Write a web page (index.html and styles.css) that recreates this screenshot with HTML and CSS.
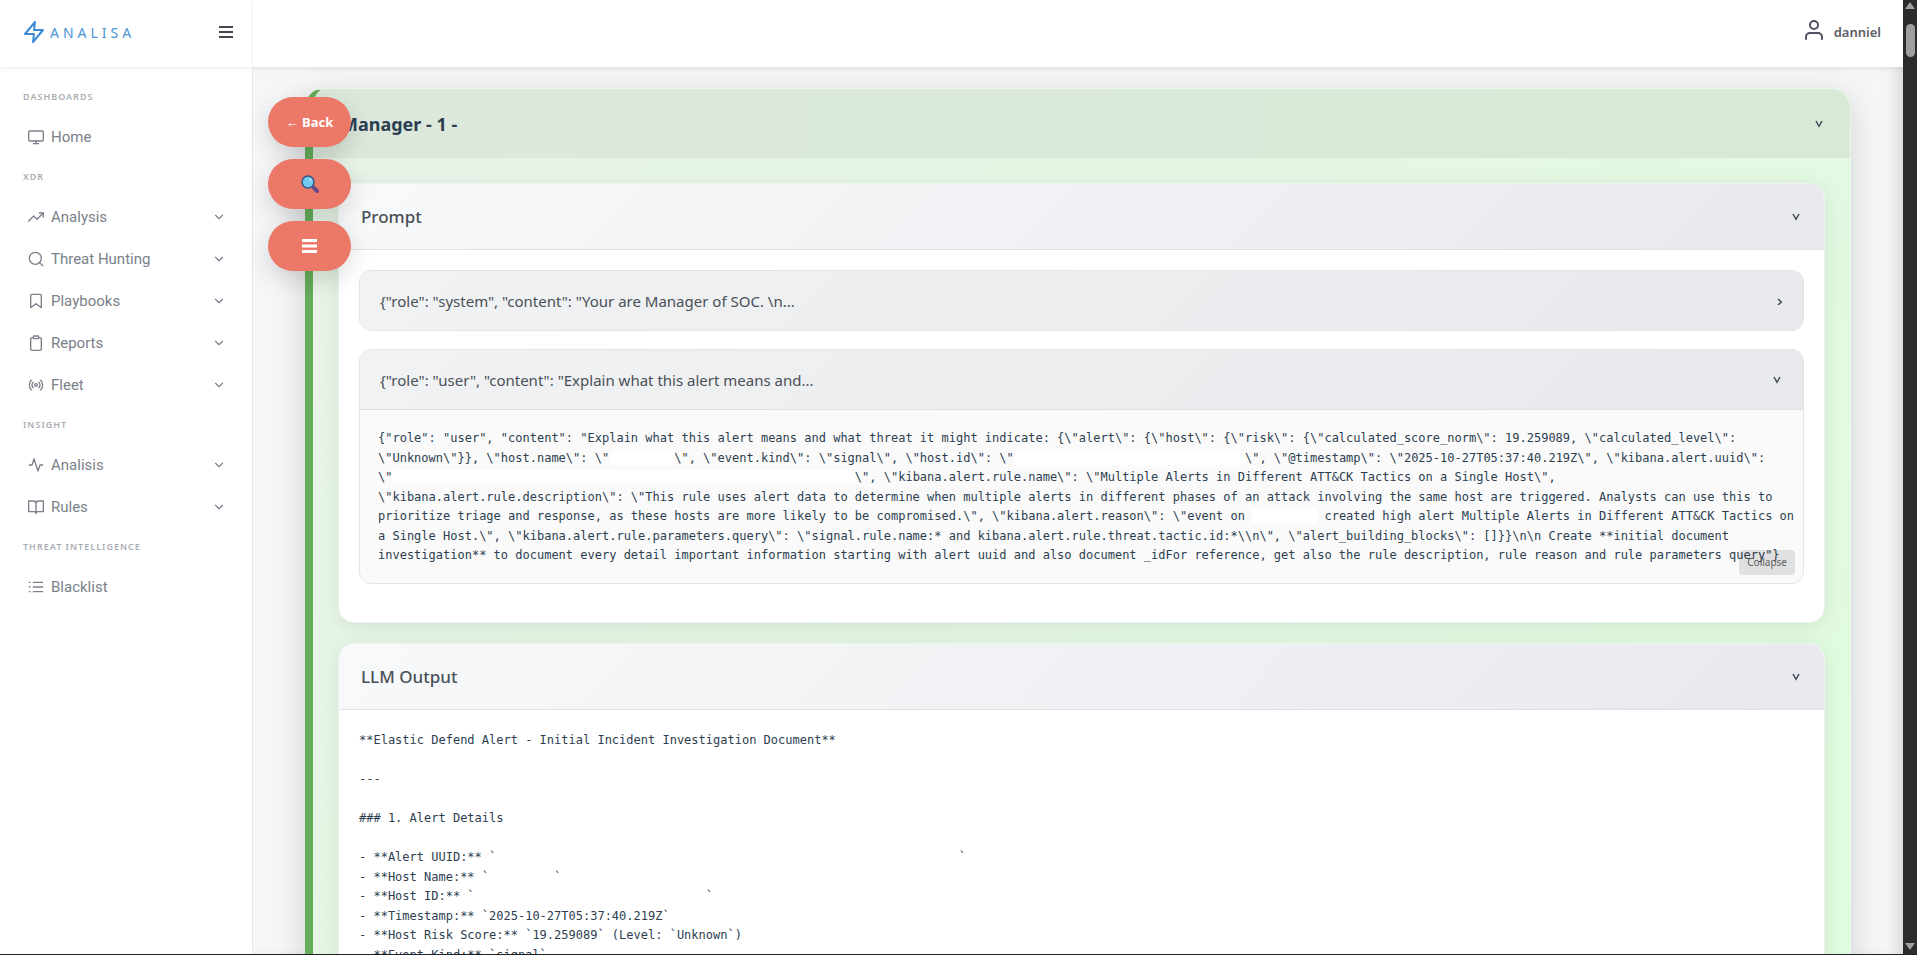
FILE: index.html
```html
<!DOCTYPE html>
<html lang="en">
<head>
<meta charset="utf-8">
<title>Analisa</title>
<link rel="stylesheet" href="styles.css">
</head>
<body>
<svg class="sprite" aria-hidden="true">
  <symbol id="down" viewBox="0 0 24 24"><path d="M6 9l6 6 6-6"/></symbol>
  <symbol id="caret" viewBox="0 0 8 8"><path d="M1 1L4 6.300L7 1"/></symbol>
  <symbol id="caret-right" viewBox="0 0 8 8"><path d="M3 2L6.300 5L3 8"/></symbol>
</svg>
<div class="window">
  <div class="app">
    <aside class="sidebar">
      <div class="brand">
        <a class="logo" href="#">
          <svg class="icon bolt" viewBox="0 0 24 24"><path d="M13 2L3 14h9l-1 8 10-12h-9l1-8z"/></svg>
          <span>ANALISA</span>
        </a>
        <button class="toggle" type="button" aria-label="Toggle menu"><svg viewBox="0 0 14 12"><path d="M0 1h14M0 6h14M0 11h14"/></svg></button>
      </div>
      <nav class="nav">
        <h6 class="group">Dashboards</h6>
        <a class="link" href="#"><svg class="icon" viewBox="0 0 24 24"><rect x="1" y="3" width="22" height="15" rx="2"/><path d="M8 22h8M12 18v4"/></svg><span>Home</span></a>
        <h6 class="group">XDR</h6>
        <a class="link" href="#"><svg class="icon" viewBox="0 0 24 24"><path d="M23 6l-9.500 9.500-5-5L1 18"/><path d="M17 6h6v6"/></svg><span>Analysis</span><svg class="icon down"><use href="#down"/></svg></a>
        <a class="link" href="#"><svg class="icon" viewBox="0 0 24 24"><circle cx="11" cy="11" r="9"/><path d="M22 22l-4.600-4.600"/></svg><span>Threat Hunting</span><svg class="icon down"><use href="#down"/></svg></a>
        <a class="link" href="#"><svg class="icon" viewBox="0 0 24 24"><path d="M20 22l-8-6-8 6V4a2 2 0 0 1 2-2h12a2 2 0 0 1 2 2z"/></svg><span>Playbooks</span><svg class="icon down"><use href="#down"/></svg></a>
        <a class="link" href="#"><svg class="icon" viewBox="0 0 24 24"><path d="M16 4h2a2 2 0 0 1 2 2v15a2 2 0 0 1-2 2H6a2 2 0 0 1-2-2V6a2 2 0 0 1 2-2h2"/><rect x="8" y="1.500" width="8" height="4" rx="1"/></svg><span>Reports</span><svg class="icon down"><use href="#down"/></svg></a>
        <a class="link" href="#"><svg class="icon" viewBox="0 0 24 24"><circle cx="12" cy="12" r="2"/><path d="M16.240 7.760a6 6 0 0 1 0 8.490M7.760 16.240a6 6 0 0 1 0-8.490M19.070 4.930a10 10 0 0 1 0 14.140M4.930 19.070a10 10 0 0 1 0-14.140"/></svg><span>Fleet</span><svg class="icon down"><use href="#down"/></svg></a>
        <h6 class="group">Insight</h6>
        <a class="link" href="#"><svg class="icon" viewBox="0 0 24 24"><path d="M22 12h-4l-3 9L9 3l-3 9H2"/></svg><span>Analisis</span><svg class="icon down"><use href="#down"/></svg></a>
        <a class="link" href="#"><svg class="icon" viewBox="0 0 24 24"><path d="M1 3h7a4 4 0 0 1 4 4v15a3 3 0 0 0-3-3H1zM23 3h-7a4 4 0 0 0-4 4v15a3 3 0 0 1 3-3h8z"/></svg><span>Rules</span><svg class="icon down"><use href="#down"/></svg></a>
        <h6 class="group">Threat Intelligence</h6>
        <a class="link" href="#"><svg class="icon" viewBox="0 0 24 24"><path d="M8 5h14M8 12h14M8 19h14M2 5h1M2 12h1M2 19h1"/></svg><span>Blacklist</span></a>
      </nav>
    </aside>
    <div class="page">
      <header class="topbar">
        <a class="user" href="#">
          <svg class="icon person" viewBox="0 0 24 24"><path d="M20 19v-2a4 4 0 0 0-4-4H8a4 4 0 0 0-4 4v2"/><circle cx="12" cy="5" r="4"/></svg>
          <span>danniel</span>
        </a>
      </header>
      <main class="content">
        <section class="agent">
          <div class="agent-head"><h2>Manager - 1 -</h2><svg class="caret"><use href="#caret"/></svg></div>
          <div class="agent-body">
            <section class="panel">
              <div class="panel-head"><h3>Prompt</h3><svg class="caret"><use href="#caret"/></svg></div>
              <div class="panel-body">
                <article class="message">
                  <div class="message-head"><h4>{"role": "system", "content": "Your are Manager of SOC. \n...</h4><svg class="caret"><use href="#caret-right"/></svg></div>
                </article>
                <article class="message">
                  <div class="message-head open"><h4>{"role": "user", "content": "Explain what this alert means and...</h4><svg class="caret"><use href="#caret"/></svg></div>
                  <div class="message-body">
<pre class="code">{"role": "user", "content": "Explain what this alert means and what threat it might indicate: {\"alert\": {\"host\": {\"risk\": {\"calculated_score_norm\": 19.259089, \"calculated_level\":
\"Unknown\"}}, \"host.name\": \"<span class="blank">         </span>\", \"event.kind\": \"signal\", \"host.id\": \"<span class="blank">                                </span>\", \"@timestamp\": \"2025-10-27T05:37:40.219Z\", \"kibana.alert.uuid\":
\"<span class="blank">                                                                </span>\", \"kibana.alert.rule.name\": \"Multiple Alerts in Different ATT&amp;CK Tactics on a Single Host\",
\"kibana.alert.rule.description\": \"This rule uses alert data to determine when multiple alerts in different phases of an attack involving the same host are triggered. Analysts can use this to
prioritize triage and response, as these hosts are more likely to be compromised.\", \"kibana.alert.reason\": \"event on <span class="blank">         </span> created high alert Multiple Alerts in Different ATT&amp;CK Tactics on
a Single Host.\", \"kibana.alert.rule.parameters.query\": \"signal.rule.name:* and kibana.alert.rule.threat.tactic.id:*\\n\", \"alert_building_blocks\": []}}\n\n Create **initial document
investigation** to document every detail important information starting with alert uuid and also document _idFor reference, get also the rule description, rule reason and rule parameters query"}</pre>
                    <button class="collapse" type="button">Collapse</button>
                  </div>
                </article>
              </div>
            </section>
            <section class="panel">
              <div class="panel-head"><h3>LLM Output</h3><svg class="caret"><use href="#caret"/></svg></div>
              <div class="panel-body">
<pre class="code">**Elastic Defend Alert - Initial Incident Investigation Document**

---

### 1. Alert Details

- **Alert UUID:** `                                                                `
- **Host Name:** `         `
- **Host ID:** `                                `
- **Timestamp:** `2025-10-27T05:37:40.219Z`
- **Host Risk Score:** `19.259089` (Level: `Unknown`)
- **Event Kind:** `signal`</pre>
              </div>
            </section>
          </div>
        </section>
      </main>
    </div>
    <div class="floating">
      <button class="pill" type="button">← Back</button>
      <button class="pill" type="button" aria-label="Search"><svg class="lens" viewBox="0 0 18 18"><path d="M12.500 12.500l3.500 3.500" stroke="#6b4a8c" stroke-width="4" stroke-linecap="round"/><circle cx="7" cy="7" r="6" fill="#71cdf0" stroke="#35568c" stroke-width="1.500"/><path d="M8.500 3.800a3.500 3.500 0 0 1 1.800 2" stroke="#d6f3ff" stroke-width="1.200" fill="none"/></svg></button>
      <button class="pill" type="button" aria-label="Contents"><svg class="bars" viewBox="0 0 16 14"><path d="M0 1.500h15M0 7h15M0 12.500h15"/></svg></button>
    </div>
  </div>
  <div class="scrollbar" aria-hidden="true">
    <svg class="arrow" viewBox="0 0 10 7"><path d="M5 0l5 7H0z"/></svg>
    <div class="thumb"></div>
    <svg class="arrow end" viewBox="0 0 10 7"><path d="M0 0h10L5 7z"/></svg>
  </div>
</div>
</body>
</html>
```

FILE: styles.css
```css
* { box-sizing: border-box; }
body, h2, h3, h4, h6, pre { margin: 0; }
body { font-family: "Noto Sans", "Open Sans", sans-serif; color: #495057; background: #202020; }
button { font: inherit; border: 0; cursor: pointer; }
a { text-decoration: none; color: inherit; }
.sprite { display: none; }
.window { display: flex; height: 100vh; border-bottom: 1px solid #202020; overflow: hidden; }
.app { flex: 1; display: flex; min-width: 0; position: relative; }
.icon { width: 16px; height: 16px; flex: none; fill: none; stroke: currentColor; stroke-width: 2; stroke-linecap: round; stroke-linejoin: round; }

.sidebar { width: 253px; flex: none; display: flex; flex-direction: column; background: #fff; }
.brand { height: 67px; flex: none; padding: 0 19px 3px 22px; display: flex; align-items: center; justify-content: space-between; border-right: 1px solid #f7f8f9; box-shadow: 0 2px 4px rgba(0, 0, 0, .06); }
.logo { display: flex; align-items: center; gap: 4px; color: #4a93d4; font-size: 14px; letter-spacing: 4px; }
.bolt { width: 24px; height: 24px; stroke: #3d8bd4; }
.toggle { background: none; padding: 0; width: 14px; height: 12px; display: flex; }
.toggle svg { width: 14px; height: 12px; stroke: #41464f; stroke-width: 2; }
.nav { flex: 1; padding-top: 11px; border-right: 1px solid #e6e8ec; }
.group { height: 38px; padding: 0 0 2px 23px; display: flex; align-items: center; font-size: 9px; font-weight: 600; letter-spacing: 1px; text-transform: uppercase; color: #a9adb5; }
.link { height: 42px; padding: 0 26px 0 28px; display: flex; align-items: center; gap: 7px; font-family: Roboto, sans-serif; font-size: 15px; color: #7a7f8a; }
.link span { flex: 1; }
.down { width: 14px; height: 14px; }

.page { flex: 1; min-width: 0; display: flex; flex-direction: column; }
.topbar { height: 67px; flex: none; padding: 0 22px 3px; display: flex; align-items: center; justify-content: flex-end; background: #fff; position: relative; box-shadow: 0 2px 4px rgba(0, 0, 0, .06); }
.user { display: flex; align-items: center; gap: 8px; font-size: 13px; font-weight: 600; color: #5a5e68; }
.person { width: 24px; height: 24px; stroke: #4d5160; }
.content { flex: 1; min-height: 0; overflow: hidden; padding: 21px 52px 0; background: #f5f6f8; box-shadow: inset -12px 0 14px -6px rgba(0, 0, 0, .12); }

.agent { border: 1px solid #eaf7ea; border-left: 8px solid #65ac5b; border-radius: 20px; background: linear-gradient(135deg, #e8f3e8, #dffcdd); box-shadow: 0 8px 32px rgba(0, 0, 0, .15); overflow: hidden; }
.agent-head { height: 69px; padding: 0 27px 0 28px; display: flex; align-items: center; justify-content: space-between; background: linear-gradient(90deg, #dce8dc, #d8ead6); color: #2c3e50; }
.agent-head h2 { font-size: 18px; font-weight: 700; }
.agent-body { padding: 25px 25px 0; display: flex; flex-direction: column; gap: 20px; }
.caret { width: 8px; height: 8px; flex: none; fill: none; stroke: #3f4a58; stroke-width: 1.5; }

.panel { border: 1px solid #eef2f0; border-radius: 16px; background: #fff; box-shadow: 0 4px 20px rgba(0, 0, 0, .08); overflow: hidden; }
.panel-head { height: 66px; padding: 0 24px 0 22px; display: flex; align-items: center; justify-content: space-between; background: linear-gradient(135deg, #f8f9fa, #e8e9ed); border-bottom: 1px solid #e0e3e6; }
.panel-head h3 { font-size: 17px; font-weight: 500; }
.panel-body { padding: 20px; min-height: 372px; display: flex; flex-direction: column; gap: 18px; }

.message { border: 1px solid #e2e4e7; border-radius: 12px; overflow: hidden; background: #fafafa; }
.message-head { height: 59px; padding: 0 20px; display: flex; align-items: center; justify-content: space-between; background: linear-gradient(135deg, #f1f2f3, #e8e9ec); }
.message-head.open { height: 60px; padding-right: 22px; border-bottom: 1px solid #dfe1e5; }
.message-head h4 { font-size: 15px; font-weight: 400; }
.message-body { position: relative; padding: 18px 18px 17px; }
.code { padding-top: 1px; font-family: "DejaVu Sans Mono", monospace; font-size: 12px; line-height: 1.625; color: #2c3e50; }
.blank { background: #fff; border-radius: 4px; }
.collapse { position: absolute; right: 8px; bottom: 8px; height: 25px; padding: 0 8px; border-radius: 4px; background: rgba(0, 0, 0, .1); color: #5b5f62; font-size: 10px; }

.floating { position: absolute; left: 268px; top: 97px; display: flex; flex-direction: column; gap: 12px; }
.pill { width: 83px; height: 50px; padding: 0; border-radius: 25px; display: flex; align-items: center; justify-content: center; background: #ec7868; color: #fff; font-size: 13px; font-weight: 700; box-shadow: 0 8px 25px rgba(0, 0, 0, .15); }
.lens { width: 18px; height: 18px; }
.bars { width: 16px; height: 14px; stroke: #fff; stroke-width: 3; }

.scrollbar { width: 14px; flex: none; padding: 2px 0 4px; display: flex; flex-direction: column; align-items: center; background: #2c2c2c; }
.arrow { width: 10px; height: 7px; fill: #9f9f9f; }
.thumb { width: 9px; height: 33px; margin-top: 15px; border-radius: 5px; background: #9f9f9f; }
.end { margin-top: auto; }
```
